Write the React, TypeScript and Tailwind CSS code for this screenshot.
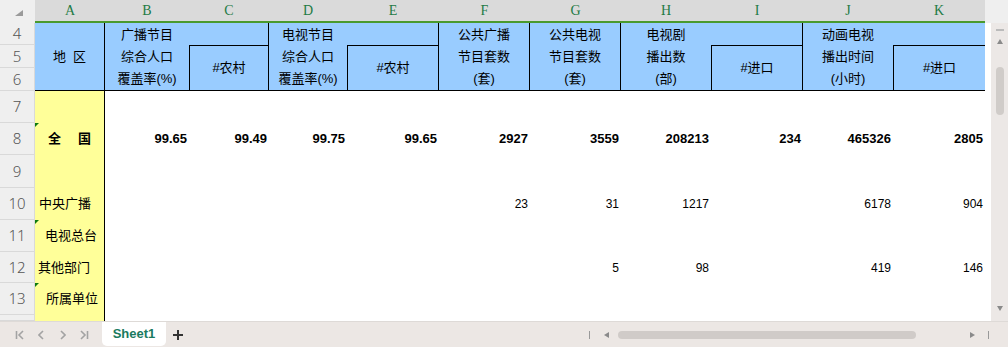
import React from "react";

const cols = ["A", "B", "C", "D", "E", "F", "G", "H", "I", "J", "K"];
const widths = [
  "w-[70px]",
  "w-[84px]",
  "w-[80px]",
  "w-[78px]",
  "w-[92px]",
  "w-[91px]",
  "w-[91px]",
  "w-[90px]",
  "w-[92px]",
  "w-[90px]",
  "w-[92px]",
];

type Row = {
  num: number;
  h: string;
  a?: string;
  pad?: string;
  bold?: boolean;
  tri?: boolean;
  vals?: string[];
};

const rows: Row[] = [
  { num: 7, h: "h-[32px]" },
  {
    num: 8,
    h: "h-[32px]",
    bold: true,
    tri: true,
    vals: ["99.65", "99.49", "99.75", "99.65", "2927", "3559", "208213", "234", "465326", "2805"],
  },
  { num: 9, h: "h-[33px]" },
  { num: 10, h: "h-[32px]", a: "中央广播", pad: "pl-[4px]", vals: ["", "", "", "", "23", "31", "1217", "", "6178", "904"] },
  { num: 11, h: "h-[32px]", a: "电视总台", pad: "pl-[10px]", tri: true },
  { num: 12, h: "h-[31px]", a: "其他部门", pad: "pl-[3px]", vals: ["", "", "", "", "", "5", "98", "", "419", "146"] },
  { num: 13, h: "h-[32px]", a: "所属单位", pad: "pl-[11px]", tri: true },
  { num: 14, h: "h-[6px]" },
];

function RowNum({ n, h }: { n?: number; h: string }) {
  return (
    <div
      className={`${h} flex w-[35px] shrink-0 items-center justify-center overflow-hidden border-b border-r border-[#d9d9d9] bg-[#efefef] font-['Noto_Sans',sans-serif] text-[15px] font-light text-[#555]`}
    >
      {n}
    </div>
  );
}

function Lines({ lines }: { lines: string[] }) {
  return (
    <>
      <div className="flex h-[23px] items-center justify-center">{lines[0]}</div>
      <div className="flex h-[22px] items-center justify-center">{lines[1]}</div>
      <div className="flex flex-1 items-center justify-center">{lines[2]}</div>
    </>
  );
}

function Pair({ lines, sub, wa, wb, last }: { lines: string[]; sub: string; wa: string; wb: string; last?: boolean }) {
  return (
    <>
      <div className={`${wa} flex flex-col border-b border-black`}>
        <Lines lines={lines} />
      </div>
      <div className={`${wb} flex flex-col`}>
        <div className={`h-[23px] border-b border-black ${last ? "" : "border-r"}`} />
        <div className={`flex flex-1 items-center justify-center border-b border-l border-black ${last ? "" : "border-r"}`}>
          {sub}
        </div>
      </div>
    </>
  );
}

function Single({ lines, w }: { lines: string[]; w: string }) {
  return (
    <div className={`${w} flex flex-col border-b border-r border-black`}>
      <Lines lines={lines} />
    </div>
  );
}

function Corner() {
  return (
    <svg width="4" height="4" className="absolute left-0 top-0">
      <polygon points="0,0 4,0 0,4" fill="#0d7a0d" />
    </svg>
  );
}

function DataRow({ r }: { r: Row }) {
  return (
    <div className="flex">
      <RowNum n={r.num === 14 ? undefined : r.num} h={r.h} />
      <div
        className={`${r.h} relative flex w-[70px] shrink-0 items-center border-r border-black bg-[#ffff99] text-[13px] ${
          r.bold ? "justify-center gap-[17px] font-bold" : r.pad
        }`}
      >
        {r.tri && <Corner />}
        {r.bold ? (
          <>
            <span>全</span>
            <span>国</span>
          </>
        ) : (
          r.a && <span className="whitespace-nowrap">{r.a}</span>
        )}
      </div>
      {widths.slice(1).map((w, i) => (
        <div
          key={i}
          className={`${w} ${r.h} flex shrink-0 items-center justify-end pr-[2px] font-['Liberation_Sans',sans-serif] ${
            r.bold ? "text-[13px] font-bold" : "text-[12px]"
          }`}
        >
          {r.vals?.[i]}
        </div>
      ))}
    </div>
  );
}

function VScroll() {
  return (
    <div className="flex w-[23px] flex-col">
      <div className="h-[23px] bg-[#efefef]" />
      <div className="flex flex-1">
        <div className="w-[6px] bg-white" />
        <div className="flex w-[17px] flex-col items-center bg-[#ece8e6] pt-[6px] pb-[10px]">
          <div className="h-[2px] w-[8px] bg-[#bbb]" />
          <svg width="6" height="5" className="mt-[8px]">
            <polygon points="3,0 6,5 0,5" fill="#8a8a8a" />
          </svg>
          <div className="mt-[23px] h-[48px] w-[8px] rounded-full bg-[#d0ccc9]" />
          <div className="flex-1" />
          <svg width="6" height="5">
            <polygon points="0,0 6,0 3,5" fill="#8a8a8a" />
          </svg>
        </div>
      </div>
    </div>
  );
}

function TabBar() {
  const st = { stroke: "#a3a3a3", strokeWidth: 1.6, fill: "none" };
  return (
    <div className="flex h-[26px] items-center border-t border-[#dedad7] bg-[#ece7e4]">
      <div className="flex w-[102px] items-center">
        <svg width="10" height="10" className="ml-[15px]">
          <line x1="1.5" y1="1" x2="1.5" y2="9" {...st} />
          <polyline points="8,1 4,5 8,9" {...st} />
        </svg>
        <svg width="6" height="10" className="ml-[13px]">
          <polyline points="5,1 1,5 5,9" {...st} />
        </svg>
        <svg width="6" height="10" className="ml-[16px]">
          <polyline points="1,1 5,5 1,9" {...st} />
        </svg>
        <svg width="10" height="10" className="ml-[13px]">
          <polyline points="2,1 6,5 2,9" {...st} />
          <line x1="8.5" y1="1" x2="8.5" y2="9" {...st} />
        </svg>
      </div>
      <div className="flex h-[24px] w-[64px] items-center justify-center self-start rounded-b-[5px] bg-white text-[13px] font-bold text-[#1a7a5e]">
        Sheet1
      </div>
      <div className="flex w-[419px] items-center">
        <svg width="10" height="10" className="ml-[7px]">
          <line x1="5" y1="0" x2="5" y2="10" stroke="#333" strokeWidth="2" />
          <line x1="0" y1="5" x2="10" y2="5" stroke="#333" strokeWidth="2" />
        </svg>
      </div>
      <div className="flex w-[423px] items-center pl-[4px]">
        <div className="h-[8px] w-[1px] bg-[#999]" />
        <svg width="5" height="6" className="ml-[14px]">
          <polygon points="5,0 5,6 0,3" fill="#8a8a8a" />
        </svg>
        <div className="ml-[9px] h-[8px] w-[298px] rounded-full bg-[#d0cbc8]" />
        <svg width="5" height="6" className="ml-[54px]">
          <polygon points="0,0 5,3 0,6" fill="#8a8a8a" />
        </svg>
        <div className="ml-[13px] h-[8px] w-[1px] bg-[#999]" />
      </div>
    </div>
  );
}

export default function App() {
  return (
    <div className="flex h-[347px] w-[1008px] flex-col overflow-hidden bg-white font-['Liberation_Sans','Noto_Sans_CJK_SC',sans-serif] text-black">
      <div className="flex h-[321px]">
        <div className="flex w-[985px] flex-col overflow-hidden">
          <div className="flex">
            <div className="flex h-[23px] w-[35px] items-start justify-start bg-[#efefef]">
              <svg width="8" height="6" className="ml-[15px] mt-[10px]">
                <polygon points="8,0 8,6 0,6" fill="#9a9a9a" />
              </svg>
            </div>
            <div className="flex flex-col">
              <div className="flex h-[21px] bg-[#dadada]">
                {cols.map((c, i) => (
                  <div
                    key={c}
                    className={`${widths[i]} flex items-center justify-center font-['Liberation_Serif',serif] text-[14px] text-[#1e7b45]`}
                  >
                    {c}
                  </div>
                ))}
              </div>
              <div className="h-[2px] bg-[#4a9a2e]" />
            </div>
          </div>
          <div className="flex">
            <div className="flex flex-col">
              <RowNum n={4} h="h-[22px]" />
              <RowNum n={5} h="h-[23px]" />
              <RowNum n={6} h="h-[23px]" />
            </div>
            <div className="flex h-[68px] bg-[#99ccff] text-[13px]">
              <div className="flex w-[70px] items-center justify-center gap-[7px] border-b border-r border-black">
                <span>地</span>
                <span>区</span>
              </div>
              <Pair lines={["广播节目", "综合人口", "覆盖率(%)"]} sub="#农村" wa="w-[84px]" wb="w-[80px]" />
              <Pair lines={["电视节目", "综合人口", "覆盖率(%)"]} sub="#农村" wa="w-[78px]" wb="w-[92px]" />
              <Single lines={["公共广播", "节目套数", "(套)"]} w="w-[91px]" />
              <Single lines={["公共电视", "节目套数", "(套)"]} w="w-[91px]" />
              <Pair lines={["电视剧", "播出数", "(部)"]} sub="#进口" wa="w-[90px]" wb="w-[92px]" />
              <Pair lines={["动画电视", "播出时间", "(小时)"]} sub="#进口" wa="w-[90px]" wb="w-[92px]" last />
            </div>
          </div>
          {rows.map((r) => (
            <DataRow key={r.num} r={r} />
          ))}
        </div>
        <VScroll />
      </div>
      <TabBar />
    </div>
  );
}
